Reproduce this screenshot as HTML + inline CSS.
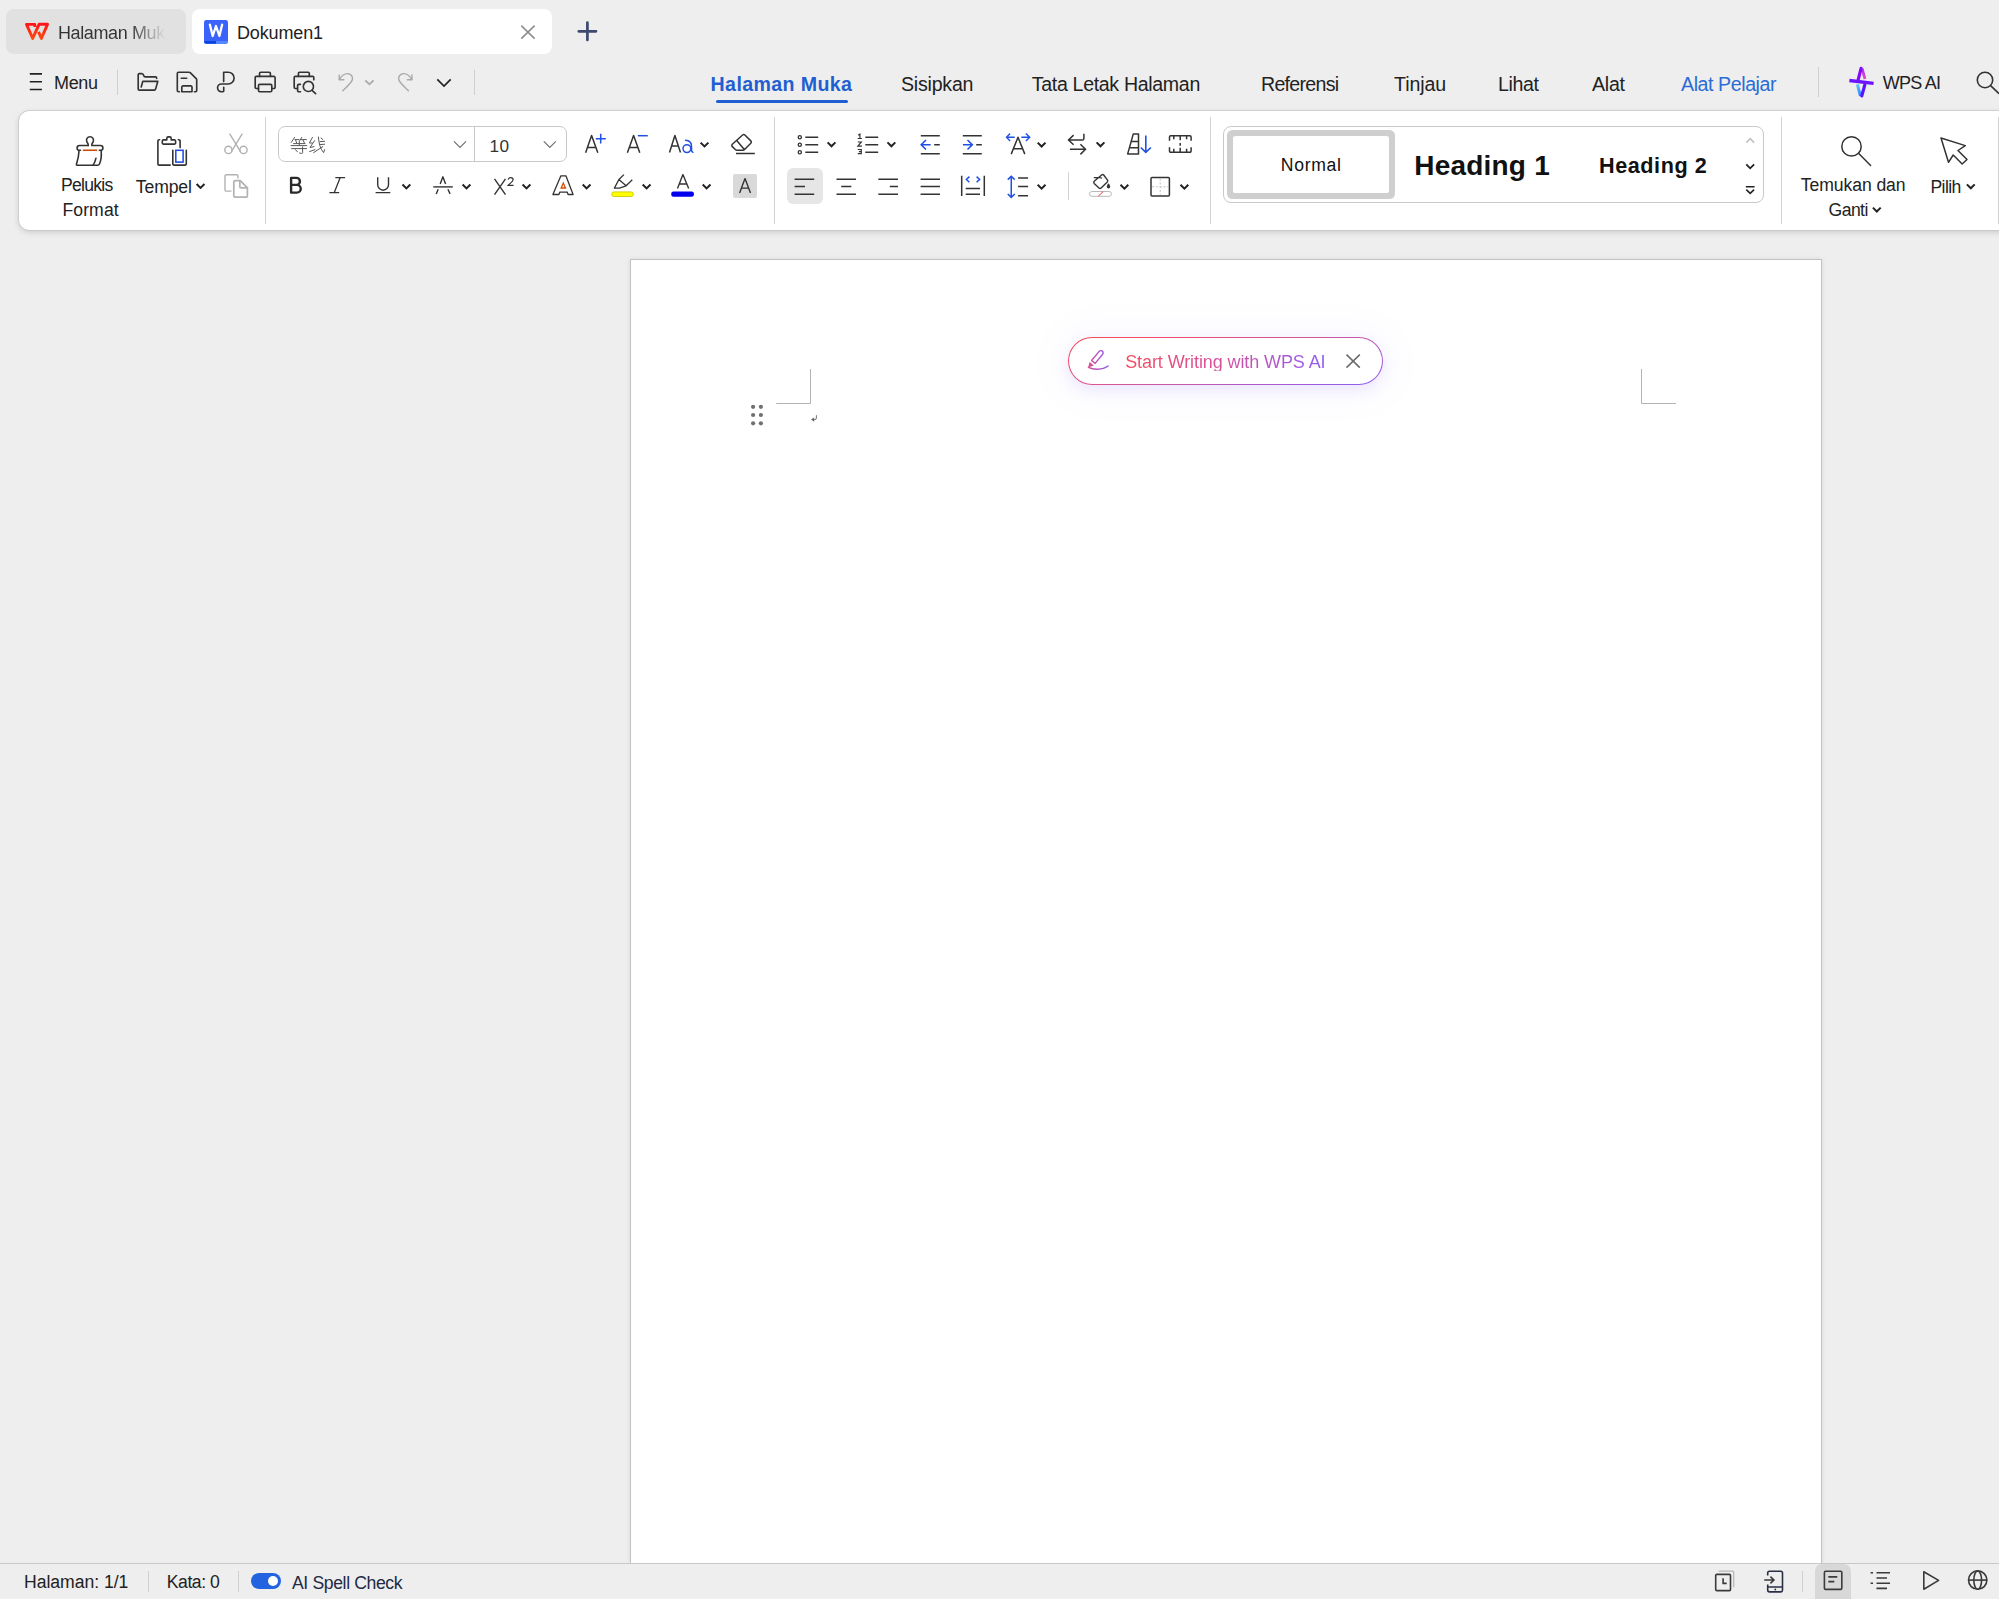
<!DOCTYPE html>
<html><head><meta charset="utf-8"><title>Dokumen1</title>
<style>
html,body{margin:0;padding:0;}
body{width:1999px;height:1599px;overflow:hidden;background:#eeeeee;position:relative;font-family:"Liberation Sans",sans-serif;}
.t{position:absolute;white-space:nowrap;line-height:1;font-family:"Liberation Sans",sans-serif;}
.b{position:absolute;box-sizing:border-box;}
</style></head><body>
<div class="b" style="left:6px;top:9px;width:180px;height:45px;background:#e1e1e1;border-radius:8px;"></div>
<div class="b" style="left:192px;top:9px;width:360px;height:45px;background:#fff;border-radius:8px;"></div>
<div class="b" style="left:0;top:0;width:1999px;height:300px;overflow:hidden;"><div class="b" style="left:18.5px;top:110.5px;width:2010px;height:119.5px;background:#fff;border-radius:10px;box-shadow:0 0 0 0.7px #c8c8c8,0 2px 6px rgba(0,0,0,0.16);"></div></div>
<div class="b" style="left:117px;top:70px;width:1px;height:25px;background:#cfcfcf;"></div>
<div class="b" style="left:474px;top:70px;width:1px;height:25px;background:#cfcfcf;"></div>
<div class="b" style="left:1818px;top:67px;width:1px;height:30px;background:#cfcfcf;"></div>
<div class="b" style="left:716.4px;top:100.1px;width:131.3px;height:3px;background:#1f5fd1;border-radius:1.5px;"></div>
<!-- ribbon separators -->
<div class="b" style="left:265px;top:117px;width:1px;height:107px;background:#d2d2d2;"></div>
<div class="b" style="left:774px;top:117px;width:1px;height:107px;background:#d2d2d2;"></div>
<div class="b" style="left:1210px;top:117px;width:1px;height:107px;background:#d2d2d2;"></div>
<div class="b" style="left:1781px;top:117px;width:1px;height:107px;background:#d2d2d2;"></div>
<div class="b" style="left:1998px;top:117px;width:1px;height:107px;background:#d2d2d2;"></div>
<div class="b" style="left:1068px;top:172px;width:1px;height:28px;background:#d2d2d2;"></div>
<!-- font box -->
<div class="b" style="left:278px;top:126px;width:289px;height:36px;border:1px solid #c9c9c9;border-radius:7px;background:#fff;"></div>
<div class="b" style="left:474px;top:127px;width:1px;height:34px;background:#c9c9c9;"></div>
<!-- shaded A -->
<div class="b" style="left:733px;top:174px;width:24px;height:24px;background:#d9d9d9;border-radius:2px;"></div>
<!-- align-left highlight -->
<div class="b" style="left:787px;top:168px;width:36px;height:36px;background:#e6e6e6;border-radius:6px;"></div>
<!-- styles gallery -->
<div class="b" style="left:1223px;top:126px;width:541px;height:77px;border:1px solid #c9c9c9;border-radius:8px;background:#fff;"></div>
<div class="b" style="left:1227px;top:130px;width:168px;height:69px;border-radius:5.5px;background:#cfcfcf;"></div>
<div class="b" style="left:1233px;top:136px;width:156px;height:57px;border-radius:2.6px;background:#fff;"></div>
<!-- page -->
<div class="b" style="left:630px;top:259px;width:1192px;height:1305px;background:#fff;border:1px solid #c2c2c2;box-shadow:0 0 5px rgba(0,0,0,0.09);"></div>
<!-- AI pill -->
<div class="b" style="left:1068px;top:337px;width:315px;height:48px;border-radius:24px;background:linear-gradient(165deg,#f5495a 0%,#f04a6a 22%,#d0589e 50%,#8a5cf6 100%);box-shadow:0 5px 14px rgba(120,90,240,0.12),0 2px 36px 12px rgba(140,110,250,0.04);"></div>
<div class="b" style="left:1069px;top:338px;width:313px;height:46px;border-radius:23px;background:#fff;"></div>
<!-- status bar -->
<div class="b" style="left:0;top:1563px;width:1999px;height:36px;background:#eeeeee;border-top:1px solid #c8c8c8;"></div>
<div class="b" style="left:148px;top:1571px;width:1px;height:21px;background:#cfcfcf;"></div>
<div class="b" style="left:238px;top:1571px;width:1px;height:21px;background:#cfcfcf;"></div>
<div class="b" style="left:1802px;top:1571px;width:1px;height:21px;background:#cfcfcf;"></div>
<div class="b" style="left:1815px;top:1564px;width:36px;height:35px;background:#d8d8d8;border-radius:7px 7px 0 0;"></div>
<div class="b" style="left:251px;top:1573px;width:30px;height:16px;background:#2463e0;border-radius:8px;"></div>
<div class="b" style="left:268px;top:1576px;width:10px;height:10px;background:#fff;border-radius:5px;"></div>
<svg id="ic" width="1999" height="1599" viewBox="0 0 1999 1599" style="position:absolute;left:0;top:0">
<defs>
<linearGradient id="gw" x1="0" y1="0" x2="0" y2="1"><stop offset="0" stop-color="#ff1418"/><stop offset="1" stop-color="#ff4a10"/></linearGradient>
<linearGradient id="gpen" gradientUnits="userSpaceOnUse" x1="1088" y1="0" x2="1109" y2="0"><stop offset="0" stop-color="#d8508a"/><stop offset="0.5" stop-color="#b455c8"/><stop offset="1" stop-color="#855cf8"/></linearGradient>
<linearGradient id="gmag" gradientUnits="userSpaceOnUse" x1="1862" y1="68" x2="1865" y2="79"><stop offset="0" stop-color="#a030f0"/><stop offset="1" stop-color="#f048c0"/></linearGradient>
<linearGradient id="gcy" gradientUnits="userSpaceOnUse" x1="1857" y1="84" x2="1860" y2="96"><stop offset="0" stop-color="#62c4ff"/><stop offset="1" stop-color="#2888ff"/></linearGradient>
</defs>
<!-- WPS logo -->
<path d="M35,26.9 L34.7,24.4 H26.5 L32.7,38.4 L39.05,24.3 H47.5 L41.4,38.4 L38.5,31.9" fill="none" stroke="url(#gw)" stroke-width="2.9" stroke-linejoin="round" stroke-linecap="butt"/>
<!-- W doc icon -->
<rect x="204" y="20" width="24" height="23.8" rx="2.4" fill="#3b63fb"/>
<path d="M204,40.9 H216 V43.8 H206.4 A2.4,2.4 0 0 1 204,41.4 Z" fill="#0a45e0"/>
<path d="M216,40.9 H228 V41.4 A2.4,2.4 0 0 1 225.6,43.8 H216 Z" fill="#5588ff"/>
<path d="M209.9,24.7 L212.7,36 L216,26 L219.4,36 L222.1,24.7" fill="none" stroke="#fff" stroke-width="2.3" stroke-linejoin="round" stroke-linecap="round"/>
<!-- tab close -->
<path d="M521.3,25.6 L534.6,38.6 M534.6,25.6 L521.3,38.6" stroke="#8c8c8c" stroke-width="1.5" fill="none"/>
<!-- plus -->
<path d="M587.4,22.6 V40 M578.8,31.3 H596" stroke="#3d4a6e" stroke-width="2.7" stroke-linecap="round" fill="none"/>
<!-- hamburger -->
<path d="M29.8,73.9 H42 M29.8,81.8 H42 M29.8,89.5 H42" stroke="#222" stroke-width="1.6" fill="none"/>
<g fill="none" stroke="#333" stroke-width="1.65" stroke-linejoin="round" stroke-linecap="round">
<!-- folder -->
<path d="M156.6,78.5 V77.8 a1,1 0 0 0 -1,-1 H145.2 c-0.8,0 -1.3,-0.5 -1.5,-1.3 c-0.3,-1.1 -0.8,-1.9 -1.9,-1.9 H139.4 a1.2,1.2 0 0 0 -1.2,1.2 V88.9 a1.2,1.2 0 0 0 1.2,1.2 H154.4 c0.6,0 1,-0.4 1.2,-1 L157.8,81.3 H142.8 L141.2,86.9"/>
<!-- save -->
<path d="M179.4,91.7 H178.5 a1.2,1.2 0 0 1 -1.2,-1.2 V73.4 a1.2,1.2 0 0 1 1.2,-1.2 H189 c0.5,0 0.9,0.2 1.2,0.5 L196.2,78.6 c0.3,0.3 0.5,0.8 0.5,1.2 V90.5 a1.2,1.2 0 0 1 -1.2,1.2 H194.4"/>
<path d="M181.3,78.2 H186.7"/>
<path d="M181.8,91.7 V87.1 a1.2,1.2 0 0 1 1.2,-1.2 H190.8 a1.2,1.2 0 0 1 1.2,1.2 V91.7 Z"/>
<!-- sign P -->
<path d="M223.66,81.6 V72.2 H228.2 a5.9,5.9 0 0 1 0,11.8 H221.4 a3.85,3.85 0 0 0 0,7.7 H222.9 a0.8,0.8 0 0 0 0.8,-0.8 V87.3"/>
<!-- print -->
<path d="M259.55,76.4 V73.4 a1.2,1.2 0 0 1 1.2,-1.2 H269.2 a1.2,1.2 0 0 1 1.2,1.2 V76.4"/>
<path d="M258.5,88.5 H256.4 a1.2,1.2 0 0 1 -1.2,-1.2 V77.6 a1.2,1.2 0 0 1 1.2,-1.2 H273.9 a1.2,1.2 0 0 1 1.2,1.2 V87.3 a1.2,1.2 0 0 1 -1.2,1.2 H271.8"/>
<rect x="258.5" y="84.3" width="13.3" height="7.4" rx="1.2"/>
<!-- print preview -->
<path d="M298.4,76.4 V73.4 a1.2,1.2 0 0 1 1.2,-1.2 H308.1 a1.2,1.2 0 0 1 1.2,1.2 V76.4"/>
<path d="M297.2,88.5 H295.4 a1.2,1.2 0 0 1 -1.2,-1.2 V77.6 a1.2,1.2 0 0 1 1.2,-1.2 H312.6 a1.2,1.2 0 0 1 1.2,1.2 V79.8"/>
<path d="M300.5,84.3 H298.8 a1.2,1.2 0 0 0 -1.2,1.2 V90.5 a1.2,1.2 0 0 0 1.2,1.2 H300.5"/>
<circle cx="308.4" cy="86.4" r="5.1"/>
<path d="M312.3,90.6 L315.6,93.6"/>
</g>
<!-- undo/redo -->
<g fill="none" stroke="#a9a9a9" stroke-width="1.4" stroke-linecap="round" stroke-linejoin="round">
<path d="M339.4,79.4 C341.5,76 344.5,73.5 347.5,73.6 C351,73.7 353,76.6 352.4,79.5 C351.8,82.5 347,86.5 342.7,90.8"/>
<path d="M339.2,75 V79.7 H343.8"/>
<path d="M411.75,79.4 C409.65,76 406.65,73.5 403.65,73.6 C400.15,73.7 398.15,76.6 398.75,79.5 C399.35,82.5 404.15,86.5 408.45,90.8"/>
<path d="M411.95,75 V79.7 H407.35"/>
<path d="M365.3,80.3 L369.4,84.3 L373.5,80.3" stroke-width="1.8" stroke-linecap="butt" stroke-linejoin="miter"/>
</g>
<path d="M437.3,79.4 L444,86 L450.7,79.4" fill="none" stroke="#222" stroke-width="1.7"/>

<!-- ===== clipboard group ===== -->
<g fill="none" stroke="#333" stroke-width="1.6" stroke-linejoin="round" stroke-linecap="round">
<!-- brush -->
<path d="M88.2,145.5 C88.6,143.9 87.5,143 86.9,141.8 A3.5,3.5 0 1 1 93.1,141.8 C92.5,143 91.4,143.9 91.8,145.5 H100.4 A2.5,2.5 0 0 1 102.9,148 C102.9,149.4 102.2,150.24 101,150.24 H99.3"/>
<path d="M88.2,145.5 H79.6 A2.5,2.5 0 0 0 77.1,148 C77.1,149.4 77.8,150.24 79,150.24 H80.5"/>
<path d="M79,150.8 C78.9,156 77.6,160.5 76.5,164 C76.3,164.8 76.7,165.2 77.4,165.2 H97.6 C98.6,165.2 99.2,164.7 99.6,163.8 C101,160.5 101.6,156 101.2,150.8"/>
<path d="M95.94,158.2 C95.4,161 94.3,163.4 93.1,165.1"/>
<path d="M82.8,150.24 H97.2" stroke="#c8500a" stroke-linecap="butt"/>
<!-- clipboard -->
<path d="M159.6,139.7 H159.1 a1.2,1.2 0 0 0 -1.2,1.2 V163.9 a1.2,1.2 0 0 0 1.2,1.2 H170.2"/>
<path d="M178.4,139.7 H178.9 a1.2,1.2 0 0 1 1.2,1.2 V147.6"/>
<path d="M162.3,141.1 a1.2,1.2 0 0 1 1.2,-1.2 H166.8 V138.4 a1.5,1.5 0 0 1 1.5,-1.5 H169.7 a1.5,1.5 0 0 1 1.5,1.5 V139.9 H174.4 a1.2,1.2 0 0 1 1.2,1.2 V142.9 a1.2,1.2 0 0 1 -1.2,1.2 H163.5 a1.2,1.2 0 0 1 -1.2,-1.2 Z"/>
<path d="M172.8,150.3 V163.9 a1.2,1.2 0 0 0 1.2,1.2 H185.1 a1.2,1.2 0 0 0 1.2,-1.2 V150.3"/>
<rect x="175.8" y="150.3" width="7.3" height="11.8" stroke="#1a47e0" stroke-width="1.5" stroke-linejoin="miter"/>
</g>
<g fill="none" stroke="#b2b2b2" stroke-width="1.4" stroke-linejoin="round" stroke-linecap="round">
<!-- scissors -->
<path d="M229.9,134.1 L240.2,151.2 M242,134.1 L231.7,151.2"/>
<circle cx="228.4" cy="149.9" r="3.6"/><circle cx="243.5" cy="149.9" r="3.6"/>
<!-- copy -->
<path d="M237.9,177.9 V176 a1.2,1.2 0 0 0 -1.2,-1.2 H226.2 a1.2,1.2 0 0 0 -1.2,1.2 V189.9 a1.2,1.2 0 0 0 1.2,1.2 H231"/>
<path d="M235,180.6 H240.3 L247.4,187.9 V196 a1.2,1.2 0 0 1 -1.2,1.2 H235 a1.2,1.2 0 0 1 -1.2,-1.2 V181.8 a1.2,1.2 0 0 1 1.2,-1.2 Z" stroke-width="1.7"/>
<path d="M239.85,180.6 V186.7 a1.2,1.2 0 0 0 1.2,1.2 H247.4" stroke-width="1.7"/>
</g>
<!-- Tempel chevron -->
<path d="M196.6,184 L200.5,187.9 L204.5,184" fill="none" stroke="#222" stroke-width="2"/>
<!-- ===== font group ===== -->
<!-- CJK font name approximated with strokes -->
<g fill="none" stroke="#3a3a3a" stroke-width="1" stroke-linecap="round" opacity="0.85">
<path d="M294.6,137.4 L291.2,142.4 M295,139.6 H299 M295.6,140 L296.6,142.8 M301.7,137.4 L299.5,141 M300.6,139.6 H306.4 M303,140 L304.4,143 M293.6,143.6 H305 M299.3,141.6 V145.5 M291,145.6 H306.8 M291.6,148.6 H306.6 M302.6,147 V152.6 Q302.6,153.6 301.4,153.4 L299.6,153 M295.4,149.6 L297.4,151.8"/>
<path d="M312.4,137.5 L309.4,143 L312.2,143 M314.6,140.6 L310,147.5 L314,146.6 M309.6,151.6 L315,149.6 M318.4,137 C318.8,143 320,148.5 323.6,152.6 L324.6,149.6 M320,141.6 L324.6,141.3 M320,144.6 L324.6,144.2 M322.8,146.6 L313.6,152.6 M321,138 L322.8,139.5"/>
</g>
<path d="M454,141.4 L460,147.4 L466,141.4" fill="none" stroke="#707070" stroke-width="1.2"/>
<path d="M543.8,141.4 L549.8,147.4 L555.8,141.4" fill="none" stroke="#707070" stroke-width="1.2"/>
<g fill="none" stroke="#333" stroke-width="1.5" stroke-linejoin="round">
<!-- A+ -->
<path d="M585.6,152.7 L591.6,135.4 L597.8,152.7 M587.7,147.4 H595.6"/>
<!-- A- -->
<path d="M627.4,152.7 L633.6,135.4 L639.8,152.7 M629.6,147.4 H637.6"/>
<!-- Aa -->
<path d="M669.5,152.6 L674.9,135.5 L680.5,152.6 M672,146 H678"/>
<!-- strike A -->
<path d="M440.2,184 L442.9,176.8 L445.6,184 M438.2,189.2 L436.2,193.9 M447.9,189.2 L450.1,193.9" stroke-width="1.4"/>
<path d="M433.3,186.9 H452.8" stroke-width="1.4"/>
<!-- X -->
<path d="M494.5,178.9 L505.5,194.6 M505.5,178.9 L494.5,194.6" stroke-width="1.4"/>
<!-- font color A -->
<path d="M677.5,188.6 L682.9,174.6 L688.7,188.6 M679.4,184 H686.9" stroke-width="1.4"/>
<!-- shaded A -->
<path d="M739.6,192.9 L745,178.6 L750.5,192.9 M741.4,188.1 H748.6" stroke-width="1.4"/>
<!-- U -->
<path d="M377.7,177.2 V184.8 a5.4,5.4 0 0 0 10.8,0 V177.2 M375.6,192.6 H390.3" stroke-width="1.4"/>
<!-- I -->
<path d="M335.3,177.6 H345.1 M329.4,192.6 H339.2 M340.2,177.6 L334.3,192.6" stroke-width="1.3"/>
<!-- eraser -->
<path d="M742.6,135 a1.6,1.6 0 0 1 2.3,0 L750.8,140.9 a1.6,1.6 0 0 1 0,2.3 L744.3,149.8 a1.6,1.6 0 0 1 -1.2,0.5 H736.7 a1.6,1.6 0 0 1 -1.1,-0.5 L732.3,146.6 a1.6,1.6 0 0 1 0,-2.3 Z M736.9,140.7 L744.3,149.6 M736,153.6 H754.8" stroke-linejoin="round"/>
<!-- highlighter -->
<path d="M623.9,174.6 L618.9,179.5 L614.4,188.1 H619.4 L626.1,185.8 L632.3,179.7 M618.9,179.5 L626.1,185.8" stroke-width="1.3" stroke-linejoin="round"/>
<!-- outlined A -->
<path d="M560.9,175.8 H565.9 L573.1,194.5 H568.1 L567.2,192.1 H559.9 L558.9,194.5 H552.9 Z" stroke-width="1.3"/>
</g>
<!-- B -->
<path d="M291.1,177.9 H296.4 a3.5,3.5 0 0 1 0,7 H291.1 M296.9,184.9 a3.85,3.85 0 0 1 0,7.7 H291.1 V177.9" fill="none" stroke="#2a2a2a" stroke-width="2.4" stroke-linejoin="round" stroke-linecap="round"/>
<!-- blue bits -->
<g fill="none" stroke="#2050e4" stroke-width="1.5">
<path d="M600.7,133.8 V143.6 M595.8,138.7 H605.8"/>
<path d="M637.8,135.7 H647.8"/>
<path d="M685.6,140.3 C689,140.6 691.5,142.4 691.5,146 V150 C691.5,151.2 692,151.8 692.9,152.3" stroke-linecap="round"/>
<circle cx="686.9" cy="148.6" r="3.9"/>
</g>
<!-- orange triangle in outlined A -->
<path d="M563.3,181.4 L566.5,188.7 H560.1 Z M563.3,184.6 L562.3,187.2 H564.3 Z" fill="#d2520a" fill-rule="evenodd"/>
<!-- superscript 2 -->
<path d="M508.2,179.7 C508.4,178.4 509.4,177.7 510.7,177.7 C512.1,177.7 513.1,178.5 513.1,179.8 C513.1,181.6 510.2,183 508.1,185.3 H513.6" fill="none" stroke="#333" stroke-width="1.2"/>
<!-- colour bars -->
<rect x="611.7" y="191.9" width="21.7" height="4.6" rx="2.3" fill="#ffff00" stroke="#cfc800" stroke-width="0.9"/>
<rect x="671.2" y="191.5" width="22.7" height="5.2" rx="2.2" fill="#0000ee"/>
<!-- chevrons font rows -->
<g fill="none" stroke="#222" stroke-width="2">
<path d="M700.6,142.6 L704.5,146.4 L708.4,142.6"/>
<path d="M402.5,184.5 L406.4,188.4 L410.3,184.5"/>
<path d="M462.6,184.5 L466.5,188.4 L470.4,184.5"/>
<path d="M522.6,184.5 L526.5,188.4 L530.4,184.5"/>
<path d="M582.7,184.5 L586.6,188.4 L590.5,184.5"/>
<path d="M642.7,184.5 L646.6,188.4 L650.5,184.5"/>
<path d="M702.7,184.5 L706.6,188.4 L710.5,184.5"/>
</g>

<!-- ===== paragraph group ===== -->
<g fill="none" stroke="#333" stroke-width="1.5">
<!-- bullets -->
<circle cx="799.8" cy="137.2" r="1.6" stroke-width="1.3"/><circle cx="799.8" cy="144.7" r="1.6" stroke-width="1.3"/><circle cx="799.8" cy="152.2" r="1.6" stroke-width="1.3"/>
<path d="M805.3,137.2 H818.2 M805.3,144.7 H818.2 M805.3,152.2 H818.2"/>
<!-- numbering -->
<path d="M865.3,137.2 H878.2 M865.3,144.7 H878.2 M865.3,152.2 H878.2"/>
<path d="M858.1,135.2 L859.9,134 V138.5 M857.7,138.5 H861.9 M857.8,142 H861.3 L857.9,146.1 H861.9 M857.8,149.5 H861.3 V153.7 H857.8 M858.9,151.6 H861.3" stroke-width="1.2"/>
<!-- decrease indent -->
<path d="M920.8,135.7 H939.8 M920.8,153.8 H939.8 M934.2,144.7 H939.8"/>
<!-- increase indent -->
<path d="M962.8,135.7 H981.8 M962.8,153.8 H981.8 M976.2,144.7 H981.8"/>
<!-- char spacing A -->
<path d="M1011.2,154.1 L1018,137.2 L1024.8,154.1 M1013.4,148.8 H1022.6" stroke-linejoin="round"/>
<!-- text direction -->
<path d="M1083.9,133.7 V138.4 a1.6,1.6 0 0 1 -1.6,1.6 H1068.6 M1073.6,135.1 L1068.5,140 L1073.6,144.8 M1069.9,149.3 H1085.4 M1080.4,144.2 L1085.5,149.3 L1080.4,154.4" stroke-linejoin="miter"/>
<!-- sort -->
<path d="M1133.3,133.9 H1138.5 V153.9 H1127.7 Z M1131.3,141.5 H1138.5 M1129.5,147.8 H1138.5" stroke-linejoin="round"/>
<!-- ruler -->
<path d="M1169.5,140.8 V136.9 a1.2,1.2 0 0 1 1.2,-1.2 H1189.9 a1.2,1.2 0 0 1 1.2,1.2 V140.8 M1173.8,135.8 V139.2 M1180.2,135.8 V140.2 M1186.6,135.8 V139.2"/>
<path d="M1169.5,147.3 V151.1 a1.2,1.2 0 0 0 1.2,1.2 H1189.9 a1.2,1.2 0 0 0 1.2,-1.2 V147.3 M1173.8,152.2 V148.8 M1180.2,152.2 V147.8 M1186.6,152.2 V148.8 M1180.2,143.1 V145.7"/>
<!-- align left/center/right/justify -->
<path d="M794.6,179.2 H814.2 M794.6,186.6 H805 M794.6,194.3 H814.2"/>
<path d="M836.5,179.2 H856 M841.2,186.6 H851.3 M836.5,194.3 H856"/>
<path d="M878.3,179.2 H898 M889.8,186.6 H898 M878.3,194.3 H898"/>
<path d="M920.6,179.2 H940 M920.6,186.6 H940 M920.6,194.3 H940"/>
<!-- distributed -->
<path d="M961.7,175.8 V196 M984.3,175.8 V196 M965.7,188.5 H980 M965.7,194.2 H980"/>
<!-- line spacing lines -->
<path d="M1018.1,177.9 H1028.1 M1018.1,186.6 H1028.1 M1018.1,195.7 H1028.1"/>
<!-- paint bucket -->
<path d="M1101.6,175 a1.5,1.5 0 0 1 2.1,0 L1107.3,179.8 a1.5,1.5 0 0 1 0,2.1 L1101.1,187.9 a1.5,1.5 0 0 1 -2.1,0 L1094.2,183.4 a1.5,1.5 0 0 1 0,-2.1 Z M1093.8,177.6 H1100.2 a1.6,1.6 0 0 1 1.5,1" stroke-linejoin="round" stroke-width="1.4"/>
<!-- borders -->
<rect x="1151" y="177.6" width="18.4" height="18.4" rx="1"/>
</g>
<path d="M1108.5,183.2 C1109.6,184.8 1110.2,185.8 1110.2,186.8 a1.7,1.7 0 0 1 -3.4,0 C1106.8,185.8 1107.4,184.8 1108.5,183.2 Z" fill="#333"/>
<rect x="1089.5" y="191.5" width="21.9" height="4.8" rx="2.4" fill="#fff" stroke="#b9b9b9" stroke-width="1"/>
<path d="M1098.4,196 L1103.1,191.7" stroke="#e03a3a" stroke-width="1"/>
<path d="M1160.2,178.5 V195.2 M1152,186.8 H1168.5" stroke="#c4c4c4" stroke-width="1" stroke-dasharray="2.2,1.6" fill="none"/>
<!-- blue bits -->
<g fill="none" stroke="#2050e4" stroke-width="1.6" stroke-linejoin="miter">
<path d="M921.4,144.7 H930.7 M926,140 L921.2,144.7 L926,149.5"/>
<path d="M962.9,144.7 H972.1 M967.5,140 L972.3,144.7 L967.5,149.5"/>
<path d="M1006.8,137.2 H1014.7 M1010.1,133.4 L1006.5,137.2 L1010.1,140.9" stroke-width="1.4"/>
<path d="M1021.3,137.2 H1029.4 M1025.9,133.4 L1029.7,137.2 L1025.9,140.9" stroke-width="1.4"/>
<path d="M1145.8,135.4 V152 M1140.8,147.5 L1145.8,152.4 L1150.9,147.5"/>
<path d="M969.4,176.6 L966.4,179.5 L969.4,182.3 M976.6,176.6 L979.6,179.5 L976.6,182.3" stroke-width="1.5"/>
<path d="M1011.25,176.6 V197 M1007.75,179.6 L1011.25,176.2 L1014.7,179.6 M1007.75,194 L1011.25,197.4 L1014.7,194" stroke-width="1.5"/>
</g>
<!-- chevrons -->
<g fill="none" stroke="#222" stroke-width="2">
<path d="M827.6,142.4 L831.5,146.3 L835.4,142.4"/>
<path d="M887.5,142.4 L891.4,146.3 L895.3,142.4"/>
<path d="M1037.7,142.6 L1041.6,146.5 L1045.5,142.6"/>
<path d="M1096.6,142.4 L1100.5,146.3 L1104.4,142.4"/>
<path d="M1037.7,184.7 L1041.6,188.6 L1045.5,184.7"/>
<path d="M1120.5,184.7 L1124.4,188.6 L1128.3,184.7"/>
<path d="M1180.5,184.7 L1184.4,188.6 L1188.3,184.7"/>
</g>

<!-- ===== styles gallery arrows ===== -->
<path d="M1746.3,142.6 L1750.2,138.7 L1754.1,142.6" fill="none" stroke="#c0c0c0" stroke-width="1.6"/>
<path d="M1746.3,164.4 L1750.2,168.3 L1754.1,164.4" fill="none" stroke="#222" stroke-width="1.8"/>
<path d="M1745.8,186.8 H1754.6 M1746.3,189.6 L1750.2,193.3 L1754.1,189.6" fill="none" stroke="#222" stroke-width="1.6"/>
<!-- ===== find / select ===== -->
<g fill="none" stroke="#333" stroke-width="1.5" stroke-linejoin="round">
<circle cx="1851.5" cy="146.4" r="9.7"/><path d="M1858.5,153.3 L1870.6,165.5" stroke-linecap="round"/>
<path d="M1941,138 L1965.3,145.6 L1958,150.5 L1967,159.5 L1962.2,164 L1953.2,155 L1948.5,162.3 Z"/>
<!-- top search -->
<circle cx="1985" cy="80" r="7.7" stroke-width="1.6"/><path d="M1990.6,85.6 L1999,93.6" stroke-width="1.6"/>
</g>
<g fill="none" stroke="#222" stroke-width="2">
<path d="M1872.9,207.6 L1876.8,211.5 L1880.7,207.6"/>
<path d="M1966.9,184.4 L1970.8,188.3 L1974.7,184.4"/>
</g>
<!-- ===== WPS AI star ===== -->
<g fill="none" stroke-linecap="round">
<path d="M1862.1,68.6 L1865,79" stroke="url(#gmag)" stroke-width="2.8" stroke-linecap="butt"/>
<path d="M1861.1,68.3 L1858.2,79.6" stroke="#8408ff" stroke-width="3.2"/>
<path d="M1857.4,84.4 L1860.4,95.8" stroke="url(#gcy)" stroke-width="3" stroke-linecap="butt"/>
<path d="M1864.8,84.8 L1861.8,95.9" stroke="#5a12ff" stroke-width="3.2"/>
<path d="M1849.4,80.5 L1873.6,83.3" stroke="#6c14ff" stroke-width="3.3" stroke-linecap="butt"/>
</g>
<!-- ===== document marks ===== -->
<path d="M810.5,369 V403.5 H776.2 M1641.5,369 V403.5 H1676" fill="none" stroke="#b4b4b4" stroke-width="1"/>
<g fill="#707070"><circle cx="753.1" cy="406.8" r="2.1"/><circle cx="760.9" cy="406.8" r="2.1"/><circle cx="753.1" cy="415" r="2.1"/><circle cx="760.9" cy="415" r="2.1"/><circle cx="753.1" cy="423.3" r="2.1"/><circle cx="760.9" cy="423.3" r="2.1"/></g>
<path d="M816.4,415.2 V418 Q816.4,419.6 814.8,419.6 H812.2" fill="none" stroke="#666" stroke-width="0.9"/>
<path d="M811,419.6 L814.2,417.4 V421.8 Z" fill="#666"/>
<!-- ===== pill icons ===== -->
<path d="M1091.6,360.5 L1099.2,351.4 A2.2,2.2 0 0 1 1102.6,354.2 L1095.2,363.4 Z" fill="none" stroke="url(#gpen)" stroke-width="1.4" stroke-linejoin="round"/>
<path d="M1089.6,362 L1093.8,365.5 L1088.2,367.6 Z" fill="#d4508f"/>
<path d="M1088.4,367.4 C1093,369.6 1102,370.4 1108,366" fill="none" stroke="url(#gpen)" stroke-width="1.5" stroke-linecap="round"/>
<path d="M1346.5,354.6 L1359.8,367.6 M1359.8,354.6 L1346.5,367.6" stroke="#6a6a6a" stroke-width="1.5" fill="none"/>
<!-- ===== status bar icons ===== -->
<g fill="none" stroke="#3a3a3a" stroke-width="1.6" stroke-linejoin="round">
<path d="M1718.6,1571.2 H1732.6 a1.1,1.1 0 0 1 1.1,1.1 V1587.2" stroke="#b8b8b8" stroke-width="1.3"/>
<rect x="1715.7" y="1574.4" width="14.8" height="16.2" rx="1.2"/>
<path d="M1723.1,1578.2 V1583.4 H1726.7" stroke-linejoin="miter"/>
<!-- phone -->
<path d="M1767.7,1575.5 V1573 a1.8,1.8 0 0 1 1.8,-1.8 H1780.7 a1.8,1.8 0 0 1 1.8,1.8 V1590.1 a1.8,1.8 0 0 1 -1.8,1.8 H1769.5 a1.8,1.8 0 0 1 -1.8,-1.8 V1584.5 M1767.7,1587 H1782.5" stroke="#2a3145"/>
<path d="M1764.2,1580 H1773.6 M1770.4,1576.6 L1773.9,1580 L1770.4,1583.4" stroke-linejoin="miter"/>
<!-- page view -->
<rect x="1824.4" y="1571.2" width="17.4" height="18.2" rx="1.2"/>
<path d="M1828.3,1576.9 H1837.3 M1828.3,1581.6 H1834.3"/>
<!-- outline -->
<path d="M1876.5,1572.7 H1890 M1876.5,1578 H1887 M1876.5,1583.2 H1890 M1876.5,1588.4 H1887 M1870.6,1572.7 H1873 M1870.6,1583.2 H1873"/>
<!-- play -->
<path d="M1923.8,1571.8 L1938.6,1580.4 L1923.8,1589.2 Z"/>
<!-- globe -->
<circle cx="1977.7" cy="1580.1" r="9.2"/>
<ellipse cx="1977.7" cy="1580.1" rx="3.9" ry="9.2"/>
<path d="M1968.5,1580.1 H1986.9"/>
</g>
<circle cx="1775.3" cy="1589.5" r="0.9" fill="#2a3145"/>

</svg>
<span class="t" id="t_tab1" style="left:58.00px;top:24.46px;font-size:18px;font-weight:400;color:#333;letter-spacing:-0.384px;background:linear-gradient(90deg,#333 0px,#333 72px,rgba(51,51,51,0.03) 106px);-webkit-background-clip:text;background-clip:text;color:transparent;">Halaman Muk</span>
<span class="t" id="t_tab2" style="left:237.00px;top:23.96px;font-size:18px;font-weight:400;color:#222;letter-spacing:-0.148px;">Dokumen1</span>
<span class="t" id="t_menu" style="left:54.00px;top:73.76px;font-size:18px;font-weight:400;color:#222;letter-spacing:-0.339px;">Menu</span>
<span class="t" id="t_home" style="left:710.60px;top:75.01px;font-size:19.6px;font-weight:700;color:#1f5fd1;letter-spacing:0.372px;">Halaman Muka</span>
<span class="t" id="t_ins" style="left:901.00px;top:75.01px;font-size:19.6px;font-weight:400;color:#222;letter-spacing:-0.223px;">Sisipkan</span>
<span class="t" id="t_lay" style="left:1031.80px;top:75.01px;font-size:19.6px;font-weight:400;color:#222;letter-spacing:-0.339px;">Tata Letak Halaman</span>
<span class="t" id="t_ref" style="left:1261.00px;top:75.01px;font-size:19.6px;font-weight:400;color:#222;letter-spacing:-0.713px;">Referensi</span>
<span class="t" id="t_rev" style="left:1394.00px;top:75.01px;font-size:19.6px;font-weight:400;color:#222;letter-spacing:-0.108px;">Tinjau</span>
<span class="t" id="t_view" style="left:1498.00px;top:75.01px;font-size:19.6px;font-weight:400;color:#222;letter-spacing:-0.411px;">Lihat</span>
<span class="t" id="t_tool" style="left:1592.00px;top:75.01px;font-size:19.6px;font-weight:400;color:#222;letter-spacing:-0.240px;">Alat</span>
<span class="t" id="t_stud" style="left:1681.00px;top:75.01px;font-size:19.6px;font-weight:400;color:#2b6bd6;letter-spacing:-0.425px;">Alat Pelajar</span>
<span class="t" id="t_ai" style="left:1882.80px;top:73.76px;font-size:18px;font-weight:400;color:#222;letter-spacing:-0.762px;">WPS AI</span>
<span class="t" id="t_pel" style="left:61.00px;top:176.90px;font-size:17.6px;font-weight:400;color:#222;letter-spacing:-0.753px;">Pelukis</span>
<span class="t" id="t_fmt" style="left:62.40px;top:201.60px;font-size:17.6px;font-weight:400;color:#222;letter-spacing:0.114px;">Format</span>
<span class="t" id="t_tmp" style="left:135.80px;top:178.60px;font-size:17.6px;font-weight:400;color:#222;letter-spacing:-0.121px;">Tempel</span>
<span class="t" id="t_10" style="left:489.60px;top:137.64px;font-size:17.2px;font-weight:400;color:#333;letter-spacing:0.441px;">10</span>
<span class="t" id="t_norm" style="left:1280.80px;top:156.70px;font-size:17.6px;font-weight:400;color:#111;letter-spacing:0.682px;">Normal</span>
<span class="t" id="t_h1" style="left:1414.20px;top:152.20px;font-size:28px;font-weight:700;color:#111;letter-spacing:0.221px;">Heading 1</span>
<span class="t" id="t_h2" style="left:1599.00px;top:154.72px;font-size:21.6px;font-weight:700;color:#111;letter-spacing:0.577px;">Heading 2</span>
<span class="t" id="t_find" style="left:1800.80px;top:176.70px;font-size:17.6px;font-weight:400;color:#222;letter-spacing:-0.085px;">Temukan dan</span>
<span class="t" id="t_gan" style="left:1828.60px;top:201.70px;font-size:17.6px;font-weight:400;color:#222;letter-spacing:-0.586px;">Ganti</span>
<span class="t" id="t_pil" style="left:1930.40px;top:179.10px;font-size:17.6px;font-weight:400;color:#222;letter-spacing:-0.565px;">Pilih</span>
<span class="t" id="t_pill" style="left:1125.20px;top:352.96px;font-size:18px;font-weight:400;color:#e4507a;letter-spacing:-0.096px;background:linear-gradient(90deg,#f24c5c 0%,#d8509a 45%,#8f5cf2 100%);-webkit-background-clip:text;background-clip:text;color:transparent;">Start Writing with WPS AI</span>
<span class="t" id="t_pg" style="left:24.00px;top:1574.30px;font-size:17.6px;font-weight:400;color:#222;letter-spacing:-0.023px;">Halaman: 1/1</span>
<span class="t" id="t_kata" style="left:166.80px;top:1574.30px;font-size:17.6px;font-weight:400;color:#222;letter-spacing:-0.461px;">Kata: 0</span>
<span class="t" id="t_spell" style="left:292.00px;top:1574.50px;font-size:17.6px;font-weight:400;color:#222a45;letter-spacing:-0.369px;">AI Spell Check</span>
</body></html>
